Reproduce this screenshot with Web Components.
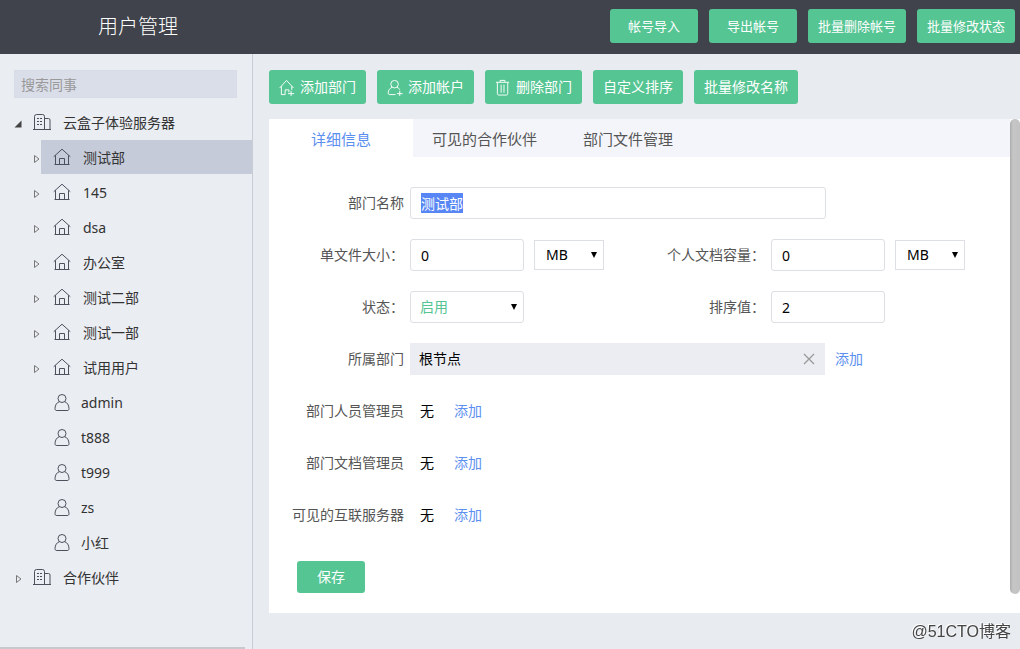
<!DOCTYPE html>
<html lang="zh-CN">
<head>
<meta charset="utf-8">
<title>用户管理</title>
<style>
  html, body { height: 100%; }
  body {
    margin: 0;
    font: 14px/20px "Noto Sans", "Noto Sans CJK SC", sans-serif;
    color: #333;
    background: #e8ebef;
    --green: #55c593;
    --blue: #5b8ff0;
    --line: #dcdfe3;
  }
</style>
</head>
<body>
<user-admin-app>
  <page-header slot="header" heading="用户管理">
    <ui-button size="small">帐号导入</ui-button>
    <ui-button size="small">导出帐号</ui-button>
    <ui-button size="small" wide>批量删除帐号</ui-button>
    <ui-button size="small" wide>批量修改状态</ui-button>
  </page-header>

  <side-bar slot="sidebar">
    <tree-item icon="building" label="云盒子体验服务器" state="open">
      <tree-item icon="house" label="测试部" state="closed" selected></tree-item>
      <tree-item icon="house" label="145" state="closed"></tree-item>
      <tree-item icon="house" label="dsa" state="closed"></tree-item>
      <tree-item icon="house" label="办公室" state="closed"></tree-item>
      <tree-item icon="house" label="测试二部" state="closed"></tree-item>
      <tree-item icon="house" label="测试一部" state="closed"></tree-item>
      <tree-item icon="house" label="试用用户" state="closed"></tree-item>
      <tree-item icon="user" label="admin"></tree-item>
      <tree-item icon="user" label="t888"></tree-item>
      <tree-item icon="user" label="t999"></tree-item>
      <tree-item icon="user" label="zs"></tree-item>
      <tree-item icon="user" label="小红"></tree-item>
    </tree-item>
    <tree-item icon="building" label="合作伙伴" state="closed"></tree-item>
  </side-bar>

  <tool-bar slot="toolbar">
    <ui-button icon="houseAdd">添加部门</ui-button>
    <ui-button icon="userAdd">添加帐户</ui-button>
    <ui-button icon="trash">删除部门</ui-button>
    <ui-button>自定义排序</ui-button>
    <ui-button>批量修改名称</ui-button>
  </tool-bar>

  <tab-panel slot="panel" tabs="详细信息,可见的合作伙伴,部门文件管理">
    <department-form>
      <text-field class="full" label="部门名称" value="测试部" wide highlight></text-field>
      <text-field label="单文件大小：" value="0"><unit-select label="单位"></unit-select></text-field>
      <text-field label="个人文档容量：" value="0"><unit-select label="单位"></unit-select></text-field>
      <select-field label="状态：" value="启用"></select-field>
      <text-field label="排序值：" value="2"></text-field>
      <value-field class="full" label="所属部门" value="根节点" boxed></value-field>
      <value-field class="full" label="部门人员管理员" value="无"></value-field>
      <value-field class="full" label="部门文档管理员" value="无"></value-field>
      <value-field class="full" label="可见的互联服务器" value="无"></value-field>
      <ui-button slot="actions" size="save">保存</ui-button>
    </department-form>
  </tab-panel>
  <water-mark slot="mark">@51CTO博客</water-mark>
</user-admin-app>

<script>
const icons = {
  building: '<path d="M1.500 15.500V2.500a2 2 0 0 1 2-2H9.500a2 2 0 0 1 2 2V15.500M11.500 4.500H15.500a1.500 1.500 0 0 1 1.500 1.500V15.500M0 15.500H18M4 4.500h2M7 4.500h2M4 7.500h2M7 7.500h2M4 10.500h2M7 10.500h2"/>',
  house: '<path d="M.7 8.700 9 1.200l8.300 7.500M2.500 7.300V16.500M15.500 7.300V16.500M1.500 16.500H16.500M6.500 16.300V10.500H11.500V16.300"/>',
  user: '<circle cx="9" cy="4.500" r="4"/><path d="M6.300 7.700C3.600 8.700 2.200 11 2 14.500c0 1.500.6 2 1.900 2h10.200c1.300 0 1.900-.5 1.900-2-.2-3.500-1.600-5.800-4.300-6.800"/>',
  houseAdd: '<path d="M.7 9.500 8 1.500l7.300 8M2.500 7.700V16.500H6.500V11.500H10.500V14M13.500 7.700V11.500M9.500 15.500H16M12.800 12.500V18"/>',
  userAdd: '<circle cx="8" cy="5.500" r="4"/><path d="M5.500 8.700C2.800 10 1.300 12 1.300 14.800c0 1.300.5 1.700 1.700 1.700H9M10.500 8.700c1.500.6 2.500 1.500 3.100 2.700M10.500 15.500H16.500M13.500 12.500V18"/>',
  trash: '<path d="M1 3.500H15M5.500 3.300V1.500H10.500V3.300M2.500 3.500V15.500a1.500 1.500 0 0 0 1.500 1.500H12A1.500 1.500 0 0 0 13.500 15.500V3.500M6.500 6V14.500M9.500 6V14.500"/>'
};
const svg = (name, size = 18) =>
  `<svg class="icon" viewBox="0 0 18 18" width="${size}" height="${size}" fill="none" stroke="currentColor" aria-hidden="true">${icons[name]}</svg>`;

class View extends HTMLElement {
  connectedCallback() {
    if (this.shadowRoot) return;
    this.attachShadow({ mode: 'open' }).innerHTML =
      `<style>*{box-sizing:border-box}:host{display:block}${this.styles()}</style>${this.markup()}`;
    this.ready?.();
  }
  attr(name) { return this.getAttribute(name) ?? ''; }
}

customElements.define('user-admin-app', class extends View {
  styles() { return `
    :host { min-height: 100%; display: grid; grid-template: auto 1fr / 253px minmax(0, 1fr); }
    header { grid-column: 1 / -1; }
    aside { display: grid; }
    main { padding: 16px 0 0 16px; }`; }
  markup() { return `
    <header><slot name="header"></slot></header>
    <aside><slot name="sidebar"></slot></aside>
    <main><slot name="toolbar"></slot><slot name="panel"></slot></main>
    <slot name="mark"></slot>`; }
});

customElements.define('page-header', class extends View {
  styles() { return `
    :host { display: flex; align-items: center; justify-content: space-between; height: 54px; padding: 0 5px 0 98px; background: #40434b; color: #fff; }
    h1 { margin: 0; font-size: 20px; line-height: 28px; font-weight: 300; }
    div { display: flex; gap: 11px; padding-bottom: 2px; }`; }
  markup() { return `<h1>${this.attr('heading')}</h1><div><slot></slot></div>`; }
});

customElements.define('ui-button', class extends View {
  styles() { return `
    button { display: flex; align-items: center; justify-content: center; gap: 4px; height: 34px; padding: 0 10px; border: 0; border-radius: 3px; background: var(--green); color: #fff; font: inherit; white-space: nowrap; cursor: pointer; }
    :host([size=small]) button { width: 88px; font-size: 13px; }
    :host([size=small][wide]) button { width: 98px; }
    :host([size=save]) button { width: 68px; height: 32px; }
    .icon { flex: none; }`; }
  markup() { return `<button type="button">${this.attr('icon') ? svg(this.attr('icon'), 17) : ''}<slot></slot></button>`; }
});

customElements.define('side-bar', class extends View {
  styles() { return `
    :host { display: flex; flex-direction: column; background: #eaedf2; border-right: 1px solid #c9ccd4; }
    input { display: block; margin: 16px 15px 7px 14px; height: 28px; padding: 0 6px; border: 1px solid #d8dce6; border-radius: 0; background: #dadee9; font: inherit; outline: 0; }
    input::placeholder { color: #999; opacity: 1; }
    nav { flex: 1; }
    .scroll { height: 2px; margin-right: 7px; background: #c8c9cc; }`; }
  markup() { return `<input type="search" placeholder="搜索同事" aria-label="搜索同事"><nav><slot></slot></nav><div class="scroll"></div>`; }
});

customElements.define('tree-item', class extends View {
  styles() { return `
    .row { display: flex; align-items: center; height: 35px; }
    .arrow { flex: none; width: 10px; height: 10px; margin: 3px 0 0 13px; color: #777; }
    .node { flex: 1; display: flex; align-items: center; height: 34px; padding-left: 10px; gap: 12px; color: #333; text-decoration: none; }
    .icon { flex: none; color: #4c515c; }
    :host([icon=house]) .arrow, :host([icon=user]) .arrow { margin-left: 31px; }
    :host([icon=house]) .node { margin-bottom: 1px; padding-left: 12px; }
    :host([icon=house]) span { padding-top: 2px; }
    :host([icon=user]) .node { padding-left: 12px; gap: 10px; }
    :host([selected]) .node { background: #c5cbd9; }`; }
  markup() {
    const state = this.attr('state');
    const arrow = state === 'open' ? '<path d="M8.500 1.500V8.500H1.500z" fill="#444"/>'
      : state === 'closed' ? '<path d="M3.500 1.500V8.500L8 5z" fill="none" stroke="currentColor"/>' : '';
    return `<div class="row"><svg class="arrow" viewBox="0 0 10 10" aria-hidden="true">${arrow}</svg><a class="node" href="#">${svg(this.attr('icon'))}<span>${this.attr('label')}</span></a></div><slot></slot>`;
  }
});

customElements.define('tool-bar', class extends View {
  styles() { return `:host { display: flex; flex-wrap: wrap; gap: 11px; margin-bottom: 15px; }`; }
  markup() { return `<slot></slot>`; }
});

customElements.define('tab-panel', class extends View {
  styles() { return `
    :host { display: grid; grid-template-columns: minmax(0, 1fr) 10px; background: #fff; }
    nav { display: flex; height: 38px; background: #f4f5fa; font-size: 15px; }
    a { display: flex; align-items: center; padding-top: 2px; color: #555; text-decoration: none; white-space: nowrap; }
    .active { justify-content: center; width: 144px; background: #fff; color: var(--blue); }
    .rest { display: flex; gap: 46px; padding-left: 19px; }
    .scroll { margin-bottom: 19px; border-radius: 5px; background: linear-gradient(90deg, #adadad, #c6c6c6 30%, #c2c2c2); }`; }
  markup() {
    const [first, ...rest] = this.attr('tabs').split(',');
    return `<section><nav><a class="active" href="#" aria-current="page">${first}</a><div class="rest">${rest.map(t => `<a href="#">${t}</a>`).join('')}</div></nav><slot></slot></section><div class="scroll"></div>`;
  }
});

customElements.define('department-form', class extends View {
  styles() { return `
    form { display: grid; grid-template-columns: 361px minmax(0, 1fr); gap: 20px 0; padding: 30px 0 20px; }
    ::slotted(.full) { grid-column: 1 / -1; }
    .actions { grid-column: 1 / -1; padding: 10px 0 0 28px; }`; }
  markup() { return `<form><slot></slot><div class="actions"><slot name="actions"></slot></div></form>`; }
});

const fieldStyles = `
  :host { display: flex; align-items: center; height: 32px; }
  .label { flex: none; width: 135px; margin-right: 6px; text-align: right; color: #555; white-space: nowrap; }
  a { color: var(--blue); text-decoration: none; }`;

customElements.define('text-field', class extends View {
  styles() { return `${fieldStyles}
    input { width: 114px; height: 32px; padding: 0 10px; border: 1px solid var(--line); border-radius: 3px; outline: 0; background: #fff; color: #000; font: inherit; }
    :host([wide]) input { width: 416px; }
    input::selection { background: rgba(86, 134, 245, .99); color: #fff; }
    ::slotted(*) { margin-left: 10px; }`; }
  markup() { return `<label class="label" for="c">${this.attr('label')}</label><input id="c" type="text" value="${this.attr('value')}"><slot></slot>`; }
  ready() {
    if (!this.hasAttribute('highlight')) return;
    const input = this.shadowRoot.querySelector('input');
    input.focus();
    input.select();
  }
});

const selectStyles = `
  .select { display: grid; align-items: center; }
  .select > * { grid-area: 1 / 1; }
  select { appearance: none; margin: 0; border: 1px solid var(--line); background: #fff; color: #000; font: inherit; outline: 0; }
  svg { justify-self: end; pointer-events: none; }`;
const caret = '<svg width="8" height="8" viewBox="0 0 8 8" aria-hidden="true"><path d="M1 1h6L4 7z"/></svg>';

customElements.define('unit-select', class extends View {
  styles() { return `${selectStyles}
    select { width: 70px; height: 30px; padding: 0 11px; }
    svg { margin-right: 6px; }`; }
  markup() { return `<div class="select"><select aria-label="${this.attr('label')}"><option>MB</option><option>GB</option></select>${caret}</div>`; }
});

customElements.define('select-field', class extends View {
  styles() { return `${fieldStyles}${selectStyles}
    select { width: 114px; height: 32px; padding: 0 9px; border-radius: 3px; color: var(--green); }
    svg { margin-right: 6px; }`; }
  markup() { return `<label class="label" for="c">${this.attr('label')}</label><div class="select"><select id="c"><option>${this.attr('value')}</option><option>禁用</option></select>${caret}</div>`; }
});

customElements.define('value-field', class extends View {
  styles() { return `${fieldStyles}
    .value { display: flex; align-items: center; justify-content: space-between; height: 32px; margin-right: 20px; padding-left: 10px; color: #000; }
    :host([boxed]) .value { width: 415px; margin-right: 10px; padding: 0 10px 0 9px; background: #ebedf3; }
    button { display: flex; padding: 0; border: 0; background: none; color: #999; cursor: pointer; }`; }
  markup() {
    const clear = this.hasAttribute('boxed')
      ? '<button type="button" aria-label="清除"><svg width="12" height="12" viewBox="0 0 12 12" fill="none" stroke="currentColor" stroke-width="1.3"><path d="m1 1 10 10M11 1 1 11"/></svg></button>' : '';
    return `<span class="label">${this.attr('label')}</span><span class="value">${this.attr('value')}${clear}</span><a href="#">添加</a>`;
  }
});

customElements.define('water-mark', class extends View {
  styles() { return `:host { position: fixed; right: 9px; bottom: 7px; font: 16px/20px "Liberation Sans", "Noto Sans CJK SC", sans-serif; color: #444; text-shadow: -1px -1px 0 #fff; }`; }
  markup() { return `<slot></slot>`; }
});
</script>
</body>
</html>
